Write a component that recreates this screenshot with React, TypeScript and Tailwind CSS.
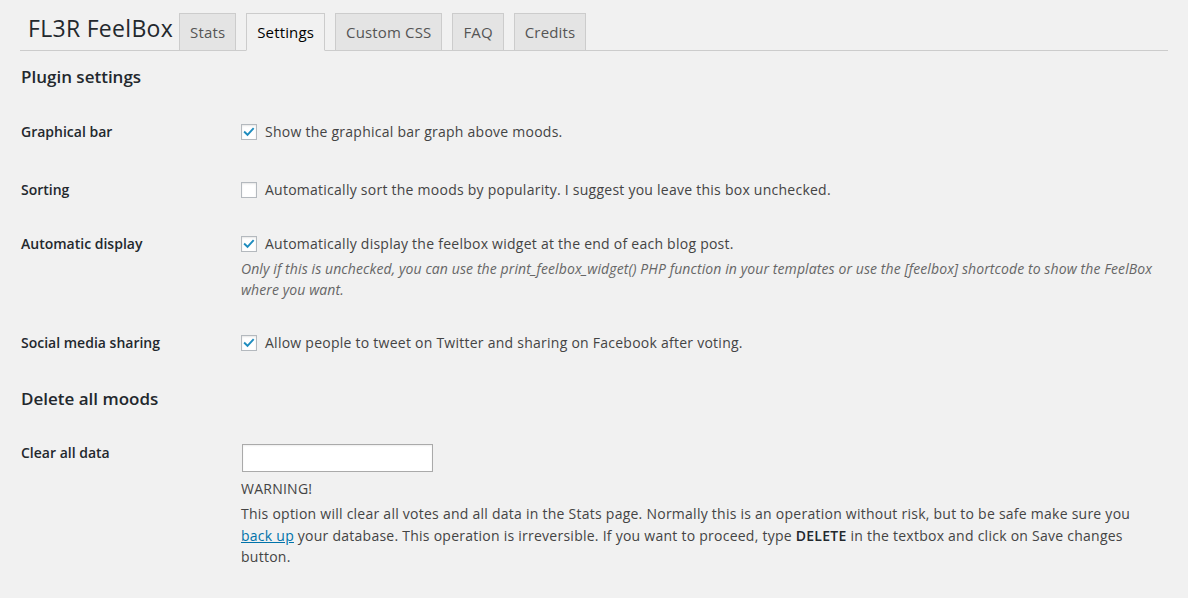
const tabs = ["Stats", "Settings", "Custom CSS", "FAQ", "Credits"];

function Checkbox({ checked }: { checked: boolean }) {
  return (
    <span className="relative mr-2 inline-flex h-4 w-4 shrink-0 items-center justify-center border border-[#b4b9be] bg-white shadow-[inset_0_1px_2px_rgba(0,0,0,0.1)]">
      {checked && (
        <svg viewBox="0 0 16 16" className="h-[14px] w-[14px]">
          <path
            d="M3.2 8.2 L6.3 11.2 L12.6 4.4"
            fill="none"
            stroke="#1e8cbe"
            strokeWidth={2.2}
            strokeLinecap="square"
          />
        </svg>
      )}
    </span>
  );
}

function Row({
  label,
  className,
  children,
}: {
  label: string;
  className?: string;
  children: React.ReactNode;
}) {
  return (
    <div className={"flex " + (className ?? "")}>
      <div className="w-[220px] shrink-0 text-[14px] font-semibold leading-[21px] text-[#23282d]">
        {label}
      </div>
      <div className="min-w-0 flex-1 text-[14px] leading-[21px] tracking-[0.25px]">{children}</div>
    </div>
  );
}

function CheckLine({ checked, text }: { checked: boolean; text: string }) {
  return (
    <label className="flex items-center">
      <Checkbox checked={checked} />
      <span>{text}</span>
    </label>
  );
}

export default function App() {
  return (
    <div className="min-h-screen bg-[#f1f1f1] font-['Open_Sans',sans-serif] text-[#444]">
      <div className="mx-5 pt-[13px]">
        <div className="flex items-end border-b border-[#ccc]">
          <h1 className="mb-[7px] pl-2 text-[23px] leading-[29px] font-normal tracking-[0.3px] text-[#23282d]">
            FL3R FeelBox
          </h1>
          <div className="ml-[6px] flex gap-[10px]">
            {tabs.map((t) => (
              <div
                key={t}
                className={
                  "-mb-px border border-[#ccc] px-[10px] pt-[6px] pb-[6px] text-[15px] leading-[24px] tracking-[0.15px] font-medium " +
                  (t === "Settings"
                    ? "border-b-[#f1f1f1] bg-[#f1f1f1] text-black"
                    : "bg-[#e4e4e4] text-[#555]")
                }
              >
                {t}
              </div>
            ))}
          </div>
        </div>

        <div className="pl-px pr-2">
          <h2 className="mt-[14px] text-[17px] leading-[23px] font-semibold text-[#23282d]">
            Plugin settings
          </h2>

          <Row label="Graphical bar" className="mt-[33px]">
            <CheckLine checked text="Show the graphical bar graph above moods." />
          </Row>

          <Row label="Sorting" className="mt-[37px]">
            <CheckLine
              checked={false}
              text="Automatically sort the moods by popularity. I suggest you leave this box unchecked."
            />
          </Row>

          <Row label="Automatic display" className="mt-[33px]">
            <CheckLine
              checked
              text="Automatically display the feelbox widget at the end of each blog post."
            />
            <p className="mt-1 italic tracking-[0.1px] text-[#666]">
              Only if this is unchecked, you can use the print_feelbox_widget() PHP function in
              your templates or use the [feelbox] shortcode to show the FeelBox where you want.
            </p>
          </Row>

          <Row label="Social media sharing" className="mt-[32px]">
            <CheckLine
              checked
              text="Allow people to tweet on Twitter and sharing on Facebook after voting."
            />
          </Row>

          <h2 className="mt-[34px] text-[17px] leading-[23px] font-semibold text-[#23282d]">
            Delete all moods
          </h2>

          <Row label="Clear all data" className="mt-[32px]">
            <input
              type="text"
              className="mt-[2px] ml-px block h-[28px] w-[191px] border border-[#aaa] bg-white px-2 shadow-[inset_0_1px_2px_rgba(0,0,0,0.07)] outline-none"
            />
            <p className="mt-[6px]">WARNING!</p>
            <p className="mt-[4px] leading-[21.5px]">
              This option will clear all votes and all data in the Stats page. Normally this is
              an operation without risk, but to be safe make sure you{" "}
              <a href="#" className="text-[#0073aa] underline">
                back up
              </a>{" "}
              your database. This operation is irreversible. If you want to proceed, type{" "}
              <strong className="font-semibold text-[#23282d]">DELETE</strong> in the textbox and
              click on Save changes button.
            </p>
          </Row>
        </div>
      </div>
    </div>
  );
}
